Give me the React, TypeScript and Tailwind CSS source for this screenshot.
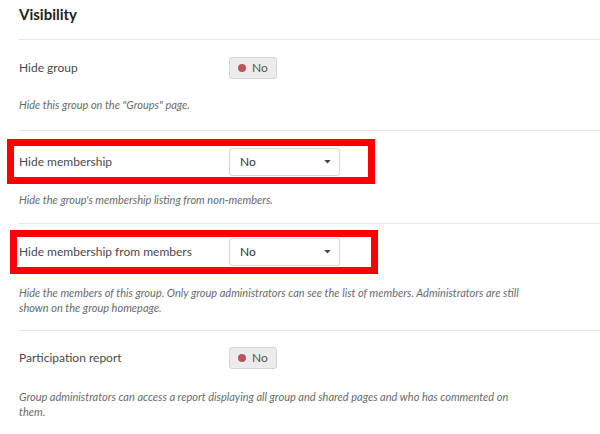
import React from "react";

const font = { fontFamily: "Lato, 'Open Sans', sans-serif" };

function Toggle() {
  return (
    <div className="flex h-[22px] w-[48px] items-center gap-[6px] rounded-[3px] border border-[#d4d4d4] bg-[#ececec] pl-[8px] text-[12px] text-[#555]">
      <span className="h-[8px] w-[8px] rounded-full bg-[#b9555b]" />
      <span>No</span>
    </div>
  );
}

function Select() {
  return (
    <div className="flex h-[28px] w-[111px] items-center justify-between rounded-[3px] border border-[#d6d6d6] bg-white pl-[10px] pr-[8px] text-[12px] text-[#333]">
      <span>No</span>
      <svg width="7" height="4" viewBox="0 0 8 5">
        <path d="M0 0 L8 0 L4 4.5 Z" fill="#444" />
      </svg>
    </div>
  );
}

function Desc({ children }: { children: React.ReactNode }) {
  return (
    <p className="max-w-[512px] text-[11px] italic leading-[15px] text-[#6b6b6b]">{children}</p>
  );
}

export default function App() {
  return (
    <div className="h-[434px] w-[600px] overflow-hidden bg-white" style={font}>
      <div className="flex h-[39px] items-center pl-[19px] pb-[10px]">
        <h2 className="text-[15px] font-bold text-[#222]">Visibility</h2>
      </div>

      <div className="ml-[19px] h-[91px] border-t border-[#e6e6e6]">
        <div className="flex h-[22px] items-center mt-[17px]">
          <div className="w-[210px] text-[12px] text-[#4a4a4a]">Hide group</div>
          <Toggle />
        </div>
        <div className="mt-[18px]">
          <Desc>Hide this group on the "Groups" page.</Desc>
        </div>
      </div>

      <div className="h-[93px] border-t border-[#e6e6e6] ml-[19px]">
        <div className="-ml-[12px] mt-[8px] flex h-[45px] w-[368px] items-center border-[7px] border-[#ff0000] pl-[5px]">
          <div className="w-[210px] text-[12px] text-[#4a4a4a]">Hide membership</div>
          <Select />
        </div>
        <div className="mt-[8px]">
          <Desc>Hide the group's membership listing from non-members.</Desc>
        </div>
      </div>

      <div className="h-[107px] border-t border-[#e6e6e6] ml-[19px]">
        <div className="-ml-[9px] mt-[6px] flex h-[44px] w-[368px] items-center border-[7px] border-[#ff0000] pl-[2px]">
          <div className="w-[210px] text-[12px] text-[#4a4a4a]">Hide membership from members</div>
          <Select />
        </div>
        <div className="mt-[11px]">
          <Desc>
            Hide the members of this group. Only group administrators can see the list of members. Administrators are still shown on the group homepage.
          </Desc>
        </div>
      </div>

      <div className="border-t border-[#e6e6e6] ml-[19px]">
        <div className="flex h-[22px] items-center mt-[16px]">
          <div className="w-[210px] text-[12px] text-[#4a4a4a]">Participation report</div>
          <Toggle />
        </div>
        <div className="mt-[20px]">
          <Desc>
            Group administrators can access a report displaying all group and shared pages and who has commented on them.
          </Desc>
        </div>
      </div>
    </div>
  );
}
